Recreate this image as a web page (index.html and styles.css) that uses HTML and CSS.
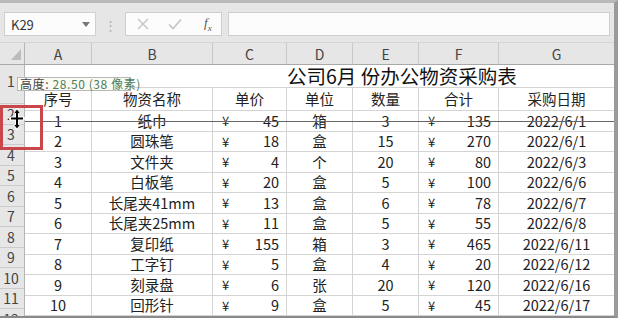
FILE: index.html
```html
<!DOCTYPE html>
<html lang="zh-CN">
<head>
    <meta charset="UTF-8">
    <title>公司6月份办公物资采购表</title>
    <link rel="stylesheet" href="styles.css">
</head>
<body>
    <div class="window">
        <div class="formula-bar">
            <div class="name-box">
                <span>K29</span>
                <svg class="caret" width="8" height="5" viewBox="0 0 8 5"><path d="M0 0h8L4 5z" fill="#777"/></svg>
            </div>
            <div class="grip">⋮</div>
            <div class="fx-buttons">
                <svg width="12" height="12" viewBox="0 0 12 12"><path d="M1 1l10 10M11 1L1 11" stroke="#c4c4c4" stroke-width="1.4" fill="none"/></svg>
                <svg width="14" height="12" viewBox="0 0 14 12"><path d="M1 6.5l4 4L13 1.5" stroke="#c4c4c4" stroke-width="1.6" fill="none"/></svg>
                <span class="fx">f<sub>x</sub></span>
            </div>
            <div class="formula-input"></div>
        </div>

        <div class="sheet">
            <div class="col-heads">
                <div class="corner">
                    <svg width="10" height="11" viewBox="0 0 10 11"><path d="M10 0v11H0z" fill="#bcbcbc"/></svg>
                </div>
                <div>A</div>
                <div>B</div>
                <div>C</div>
                <div>D</div>
                <div>E</div>
                <div>F</div>
                <div>G</div>
            </div>

            <div class="sheet-body">
                <div class="row-heads">
                    <div class="rh rh-tall">1</div>
                    <div class="rh">2</div>
                    <div class="rh">3</div>
                    <div class="rh">4</div>
                    <div class="rh">5</div>
                    <div class="rh">6</div>
                    <div class="rh">7</div>
                    <div class="rh">8</div>
                    <div class="rh">9</div>
                    <div class="rh">10</div>
                    <div class="rh">11</div>
                    <div class="rh">12</div>
                </div>

                <div class="cells">
                    <div class="title-row">公司6月 份办公物资采购表</div>
                    <div class="row head-row">
                        <div class="cell">序号</div>
                        <div class="cell">物资名称</div>
                        <div class="cell">单价</div>
                        <div class="cell">单位</div>
                        <div class="cell">数量</div>
                        <div class="cell">合计</div>
                        <div class="cell">采购日期</div>
                    </div>
                    <div id="rows"></div>
                </div>
            </div>

            <div class="drag-line"></div>
            <div class="row-tip">高度: <span class="tip-value">28.50 (38 像素)</span></div>
            <div class="highlight"></div>
            <svg class="resize-cursor" width="16" height="22" viewBox="0 0 16 22">
                <g stroke="#fff" stroke-width="4" fill="none" stroke-linecap="round">
                    <path d="M8 2v18M2 10.5h12"/>
                </g>
                <path d="M8 1l-3.5 4.5h7zM8 21l-3.5-4.5h7z" fill="#000" stroke="#fff" stroke-width="0.8"/>
                <path d="M8 4v14M2 10.5h12" stroke="#000" stroke-width="2" fill="none"/>
            </svg>
        </div>
    </div>

    <script>
        const items = [
            [1, '纸巾', 45, '箱', 3, 135, '2022/6/1'],
            [2, '圆珠笔', 18, '盒', 15, 270, '2022/6/1'],
            [3, '文件夹', 4, '个', 20, 80, '2022/6/3'],
            [4, '白板笔', 20, '盒', 5, 100, '2022/6/6'],
            [5, '长尾夹41mm', 13, '盒', 6, 78, '2022/6/7'],
            [6, '长尾夹25mm', 11, '盒', 5, 55, '2022/6/8'],
            [7, '复印纸', 155, '箱', 3, 465, '2022/6/11'],
            [8, '工字钉', 5, '盒', 4, 20, '2022/6/12'],
            [9, '刻录盘', 6, '张', 20, 120, '2022/6/16'],
            [10, '回形针', 9, '盒', 5, 45, '2022/6/17']
        ];

        const money = value => `<div class="cell money"><span>¥</span><span>${value}</span></div>`;

        document.getElementById('rows').innerHTML = items.map(item => `
            <div class="row">
                <div class="cell">${item[0]}</div>
                <div class="cell">${item[1]}</div>
                ${money(item[2])}
                <div class="cell">${item[3]}</div>
                <div class="cell">${item[4]}</div>
                ${money(item[5])}
                <div class="cell">${item[6]}</div>
            </div>`).join('');
    </script>
</body>
</html>
```

FILE: styles.css
```css
body {
    margin: 0;
    font-family: "Noto Sans CJK SC", "Noto Sans", sans-serif;
    color: #222;
    overflow: hidden;
}

.window {
    width: 618px;
    height: 318px;
    box-sizing: border-box;
    border-top: 3px solid #b9b9b9;
    border-right: 4px solid #9a9a9a;
    border-bottom: 2px solid #8a8a8a;
    background: #e6e6e6;
    display: flex;
    flex-direction: column;
    position: relative;
    overflow: hidden;
}

/* formula bar */
.formula-bar {
    display: flex;
    align-items: center;
    height: 24px;
    padding: 9px 4px 6px 4px;
}

.name-box {
    width: 92px;
    height: 24px;
    box-sizing: border-box;
    background: #fcfcfc;
    border: 1px solid #cfcfcf;
    display: flex;
    align-items: center;
    justify-content: space-between;
    padding: 0 5px 0 6px;
    font-size: 13px;
    color: #333;
}

.grip {
    width: 29px;
    text-align: center;
    color: #b0b0b0;
    font-size: 13px;
}

.fx-buttons {
    width: 97px;
    height: 24px;
    box-sizing: border-box;
    background: #fcfcfc;
    border: 1px solid #cfcfcf;
    display: flex;
    align-items: center;
    padding-left: 11px;
    gap: 19px;
}

.fx {
    font-family: "Liberation Serif", serif;
    font-style: italic;
    font-size: 13px;
    color: #555;
    margin-left: 3px;
}

.fx sub {
    font-size: 9px;
}

.formula-input {
    flex: 1;
    height: 24px;
    box-sizing: border-box;
    margin-left: 6px;
    background: #fcfcfc;
    border: 1px solid #cfcfcf;
}

/* sheet */
.sheet {
    flex: 1;
    display: flex;
    flex-direction: column;
    overflow: hidden;
    background: #fff;
}

.col-heads {
    display: grid;
    grid-template-columns: 25px 67px 121px 74px 66px 66px 80px 115px;
    height: 21px;
    background: #e6e6e6;
    border-top: 1px solid #d4d4d4;
    border-bottom: 1px solid #a9a9a9;
    font-size: 14px;
    color: #444;
}

.col-heads div {
    border-right: 1px solid #c9c9c9;
    display: flex;
    align-items: center;
    justify-content: center;
    line-height: 1;
}

.col-heads .corner {
    justify-content: flex-end;
    align-items: flex-end;
    padding: 0 3px 4px 0;
    border-right-color: #b4b4b4;
}

.col-heads div:last-child {
    border-right: none;
}

.sheet-body {
    flex: 1;
    display: flex;
    overflow: hidden;
}

.row-heads {
    width: 25px;
    flex-shrink: 0;
    box-sizing: border-box;
    background: #e6e6e6;
    border-right: 1px solid #b4b4b4;
    font-size: 14px;
    color: #444;
}

.rh {
    height: 20.5px;
    box-sizing: border-box;
    border-bottom: 1px solid #cbcbcb;
    display: flex;
    align-items: center;
    justify-content: center;
    padding-right: 2px;
    line-height: 1;
}

.rh-tall {
    height: 39px;
    align-items: flex-start;
    padding-top: 9px;
}

.cells {
    width: 589px;
    font-size: 14.5px;
}

.title-row {
    height: 23px;
    box-sizing: border-box;
    border-bottom: 1px solid #d4d4d4;
    padding-left: 262px;
    font-size: 19.5px;
    line-height: 22px;
    color: #111;
}

.row {
    display: grid;
    grid-template-columns: 67px 121px 74px 66px 66px 80px 115px;
    height: 20.5px;
}

.head-row {
    height: 23px;
}

.cell {
    box-sizing: border-box;
    border-right: 1px solid #d4d4d4;
    border-bottom: 1px solid #d4d4d4;
    display: flex;
    align-items: center;
    justify-content: center;
    line-height: 1;
    white-space: nowrap;
}

.row .cell:last-child {
    border-right: none;
}

.money {
    justify-content: space-between;
    padding: 0 7px 0 9px;
}

.money span:first-child {
    font-size: 13px;
}

/* drag overlays */
.drag-line {
    position: absolute;
    left: 25px;
    top: 118px;
    width: 589px;
    height: 1px;
    background: #666;
}

.row-tip {
    position: absolute;
    left: 17px;
    top: 74px;
    width: 114px;
    height: 14px;
    box-sizing: border-box;
    padding: 0 2px;
    background: #fbfbf4;
    border: 1px solid #b8b8b8;
    font-size: 12px;
    line-height: 12px;
    letter-spacing: 0.6px;
    color: #444;
    white-space: nowrap;
}

.tip-value {
    color: #4b7d60;
}

.highlight {
    position: absolute;
    left: 0;
    top: 102px;
    width: 43px;
    height: 45px;
    box-sizing: border-box;
    border: 3px solid #c9474b;
}

.resize-cursor {
    position: absolute;
    left: 9px;
    top: 105px;
}
```
